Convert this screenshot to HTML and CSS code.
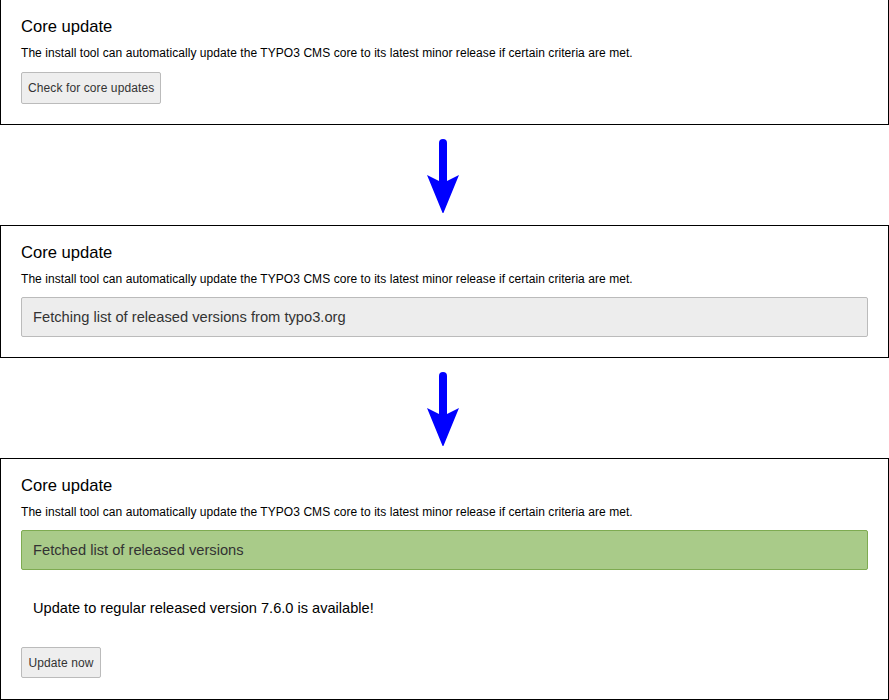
FILE: index.html
```html
<!DOCTYPE html>
<html lang="en">
<head>
    <meta charset="UTF-8">
    <title>Core update</title>
    <link rel="stylesheet" href="styles.css">
</head>
<body>
    <section class="panel">
        <h2>Core update</h2>
        <p class="intro">The install tool can automatically update the TYPO3 CMS core to its latest minor release if certain criteria are met.</p>
        <button class="btn">Check for core updates</button>
    </section>

    <div class="step-arrow">
        <svg width="34" height="74" viewBox="0 0 34 74">
            <line x1="17" y1="4" x2="17" y2="48" stroke="#0000ff" stroke-width="8" stroke-linecap="round"/>
            <polygon points="1,36 17,75 33,36 17,44" fill="#0000ff"/>
        </svg>
    </div>

    <section class="panel">
        <h2>Core update</h2>
        <p class="intro">The install tool can automatically update the TYPO3 CMS core to its latest minor release if certain criteria are met.</p>
        <div class="alert alert-loading">Fetching list of released versions from typo3.org</div>
    </section>

    <div class="step-arrow">
        <svg width="34" height="74" viewBox="0 0 34 74">
            <line x1="17" y1="4" x2="17" y2="48" stroke="#0000ff" stroke-width="8" stroke-linecap="round"/>
            <polygon points="1,36 17,75 33,36 17,44" fill="#0000ff"/>
        </svg>
    </div>

    <section class="panel">
        <h2>Core update</h2>
        <p class="intro">The install tool can automatically update the TYPO3 CMS core to its latest minor release if certain criteria are met.</p>
        <div class="alert alert-ok">Fetched list of released versions</div>
        <p class="notice">Update to regular released version 7.6.0 is available!</p>
        <button class="btn btn-small">Update now</button>
    </section>
</body>
</html>
```
FILE: styles.css
```css
body {
    margin: -1px 0 0;
    width: 889px;
    font-family: "Liberation Sans", Arial, sans-serif;
    color: #000;
    background: #fff;
}

.panel {
    border: 1px solid #000;
    padding: 17px 20px 20px;
}

.panel h2 {
    margin: 0;
    font-size: 16.6px;
    font-weight: normal;
    line-height: 20px;
}

.intro {
    margin: 8px 0 0;
    font-size: 12px;
    letter-spacing: 0.06px;
    line-height: 16px;
}

.btn {
    display: block;
    margin-top: 11px;
    height: 32px;
    padding: 0 6px;
    font-family: inherit;
    font-size: 12px;
    letter-spacing: 0.1px;
    color: #333;
    background: #eee;
    border: 1px solid #bbb;
    border-radius: 2px;
}

.alert {
    margin-top: 10px;
    padding: 0 11px;
    height: 38px;
    line-height: 38px;
    font-size: 14.7px;
    color: #333;
    border: 1px solid #bbb;
    border-radius: 2px;
}

.alert-loading {
    background: #ededed;
}

.alert-ok {
    background: #a9cb89;
    border-color: #7eab51;
}

.notice {
    margin: 28px 0 0;
    padding-left: 12px;
    font-size: 14.6px;
    line-height: 20px;
}

.btn-small {
    margin: 29px 0 1px;
    height: 31px;
    padding: 0 6.5px;
}

.step-arrow {
    display: flex;
    justify-content: center;
    padding: 14px 0 12px;
}

.step-arrow svg {
    display: block;
    margin-left: -3px;
}
```
